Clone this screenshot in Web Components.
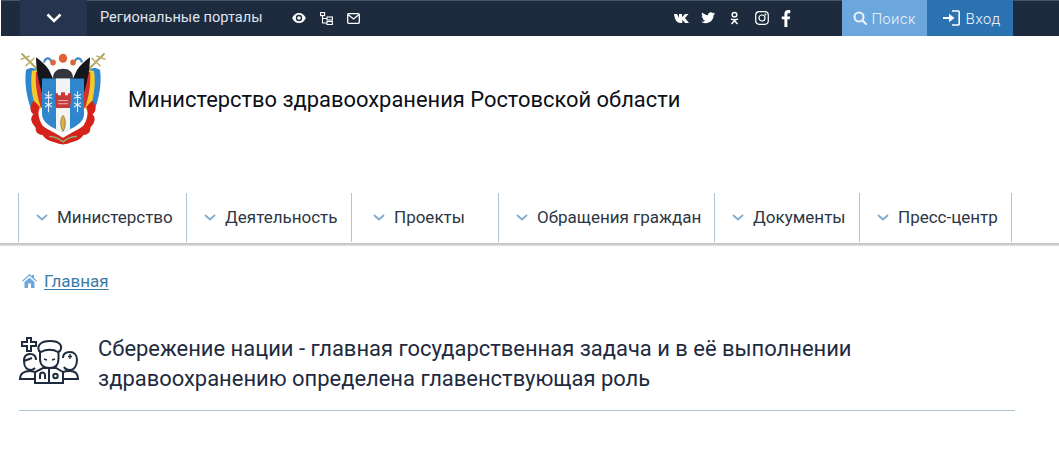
<!DOCTYPE html>
<html lang="ru"><head><meta charset="utf-8"><title>Министерство здравоохранения</title>
<style>html,body{margin:0;background:#fff;font-family:Roboto,"Liberation Sans",sans-serif;overflow:hidden}</style>
</head><body>
<top-bar></top-bar>
<site-head></site-head>
<main-nav>
<nav-item w="168">Министерство</nav-item><nav-item w="165">Деятельность</nav-item><nav-item w="147" p="21">Проекты</nav-item><nav-item w="216">Обращения граждан</nav-item><nav-item w="145">Документы</nav-item><nav-item w="153" last="1">Пресс-центр</nav-item>
</main-nav>
<bread-crumb></bread-crumb>
<page-title></page-title>
<script>
function def(name,html){customElements.define(name,class extends HTMLElement{connectedCallback(){if(this.shadowRoot)return;const r=this.attachShadow({mode:'open'});r.innerHTML=typeof html==='function'?html(this):html;}});}
def('top-bar',`<style>
:host{display:flex;height:36px;background:#1e2a3e;margin-left:1px;width:1058px;color:#dfe5ee;font-size:14.600px;box-shadow:inset 0 1px 0 #4a5468;box-sizing:border-box}
.ch{margin-left:19px;width:67px;background:#27344f;display:flex;align-items:center;justify-content:center}
.t{margin-left:13px;width:192px;line-height:35px;white-space:nowrap}
.ic{display:flex;align-items:center;gap:15px}.ic svg{display:block}
.so{margin-left:auto;display:flex;align-items:center;gap:12px;margin-right:51px}
.b{display:flex;align-items:center;justify-content:center;height:36px;width:85px;font-size:14.500px;gap:4px;font-family:Inter,Roboto,sans-serif;font-weight:300;letter-spacing:.01em}
.s{background:#6ba7dc;color:#e6f0fa}.l{width:86px;background:#2a72b0;color:#e6f0fa;margin-right:46px;gap:6px;padding-left:3px;box-sizing:border-box}
</style>
<div class="ch"><svg width="16" height="10" viewBox="0 0 16 10"><path d="M1.500 1.500 8 8l6.500-6.500" fill="none" stroke="#fff" stroke-width="2.600"/></svg></div>
<div class="t">Региональные порталы</div>
<div class="ic">
<svg width="14" height="10" viewBox="0 0 15 11"><path fill="#fff" fill-rule="evenodd" d="M7.500 0C4 0 1.300 2.200 0 5.500 1.300 8.800 4 11 7.500 11S13.700 8.800 15 5.500C13.700 2.200 11 0 7.500 0zm0 9a3.500 3.500 0 1 1 0-7 3.500 3.500 0 0 1 0 7zm0-5.500a2 2 0 1 0 0 4 2 2 0 0 0 0-4z"/></svg>
<svg width="13" height="13" viewBox="0 0 13 13" fill="none" stroke="#fff" stroke-width="1.100" style="margin-left:-1px"><rect x=".6" y=".6" width="4" height="3"/><rect x="7" y="5" width="5.400" height="3"/><rect x="7" y="9.500" width="5.400" height="3"/><path d="M2.500 3.600V11H7M2.500 6.500H7"/></svg>
<svg width="13" height="11" viewBox="0 0 13 11" fill="none" stroke="#fff" stroke-width="1.300" style="margin-left:-1px"><rect x=".7" y=".7" width="11.600" height="9.600" rx="1"/><path d="M1 1.500 6.500 6 12 1.500"/></svg>
</div>
<div class="so">
<svg width="15" height="9" viewBox="0 0 15 9"><path fill="#fff" d="M0 0h3l2 4V0h3v3l3-3h3.500l-3.500 4 4 5h-3.800L8.300 5.800V9H6.500C3 9 .8 6 0 0z"/></svg>
<svg width="14" height="12" viewBox="0 0 14 12"><path fill="#fff" d="M14 1.500c-.5.200-1 .4-1.600.4.600-.3 1-.8 1.200-1.500-.5.300-1.100.5-1.800.7A2.800 2.800 0 0 0 7 3.200C4.700 3.100 2.600 2 1.100.5.300 1.800.7 3.400 2 4.200c-.4 0-.900-.1-1.300-.3 0 1.300 1 2.500 2.300 2.800-.4.100-.800.100-1.300 0 .4 1.100 1.400 1.900 2.700 1.900A5.700 5.700 0 0 1 0 9.800 8 8 0 0 0 12.500 3.400c.600-.4 1.100-1.200 1.500-1.900z"/></svg>
<svg width="9" height="14" viewBox="0 0 9 13" fill="none" stroke="#fff" stroke-width="1.500" style="margin-left:3px"><circle cx="4.500" cy="3.200" r="2.300"/><path d="M1 7.300c2.200 1.200 4.800 1.200 7 0M4.500 8.300V9M1.500 12.500 4.500 9.200l3 3.300"/></svg>
<svg width="14" height="14" viewBox="0 0 14 14" fill="none" stroke="#fff" stroke-width="1.200" style="margin-left:4px"><rect x=".7" y=".7" width="12.600" height="12.600" rx="3.500"/><circle cx="7" cy="7" r="3"/><circle cx="10.500" cy="3.500" r=".4"/></svg>
<svg width="10" height="17" viewBox="0 0 9 16"><path fill="#fff" d="M8.500 3H7c-.8 0-1.200.3-1.200 1.200V6h2.600l-.4 2.800H5.800V16H3V8.800H.5V6H3V3.800C3 1.200 4.400 0 6.500 0h2z"/></svg>
</div>
<div class="b s"><svg width="14" height="14" viewBox="0 0 14 14" fill="none" stroke="#e6f0fa" stroke-width="2.200"><circle cx="6" cy="6" r="4.500"/><path d="m9.500 9.500 3.500 3.500" stroke-linecap="round"/></svg>Поиск</div>
<div class="b l"><svg width="17" height="16" viewBox="0 0 17 16" fill="none" stroke="#fff" stroke-width="1.600"><path d="M9 1h6.200a1 1 0 0 1 1 1v12a1 1 0 0 1-1 1H9"/><path fill="#fff" stroke="none" d="M0 7h6V3.800L11.500 8 6 12.200V9H0z"/></svg>Вход</div>`);
def('site-head',`<style>
:host{display:flex;align-items:flex-start;height:157px;box-sizing:border-box;padding:17px 0 0 20px}
svg{display:block;flex:none;filter:blur(.35px)}
h1{margin:30px 0 0 22px;font:400 21.900px/33px Roboto,sans-serif;color:#0b0f16;white-space:nowrap}
</style>
<svg width="86" height="92" viewBox="0 0 86 87" preserveAspectRatio="none">
<g fill="none" stroke-linecap="round">
<path d="M2 1 18 16M84 1 68 16" stroke="#a8a060" stroke-width="1.800"/>
<path d="M1 6 9 3M6 12 14 5M85 6 77 3M80 12 72 5" stroke="#c0b26a" stroke-width="1.500"/>
</g>
<path d="M6 16c5-3 9-2 12 1l2 35-7 5C7 45 4 28 6 16z" fill="#2f86cc"/>
<path d="M80 16c-5-3-9-2-12 1l-2 35 7 5c6-12 9-29 7-41z" fill="#2f86cc"/>
<path d="M12 17c3-1 5-1 7 1l3 34-5 3c-5-12-7-26-5-38z" fill="#f4c92a"/>
<path d="M74 17c-3-1-5-1-7 1l-3 34 5 3c5-12 7-26 5-38z" fill="#f4c92a"/>
<path d="M16 18h5l3 32-3 2c-4-11-6-23-5-34z" fill="#d5302b"/>
<path d="M70 18h-5l-3 32 3 2c4-11 6-23 5-34z" fill="#d5302b"/>
<path d="M16 4c5 3 10 8 13 12l4 8 4-2V30H23l-1 8c-3-10-6-22-6-34z" fill="#15171c"/>
<path d="M70 4c-5 3-10 8-13 12l-4 8-4-2V30h14l1 8c3-10 6-22 6-34z" fill="#15171c"/>
<path d="M33 24c0-6 4-9 10-9s10 3 10 9l-3 4H36z" fill="#34363d"/>
<path d="M24 9c1-5 6-5 7-1M62 9c-1-5-6-5-7-1" fill="none" stroke="#3d8bc9" stroke-width="2"/>
<circle cx="33" cy="9" r="2.800" fill="#d9683f"/><circle cx="43" cy="5" r="4.200" fill="#e0603a"/><circle cx="53" cy="9" r="2.800" fill="#d9683f"/>
<path d="M22 24h42v34c0 8-10 13-21 17-11-4-21-9-21-17z" fill="#2f86cc"/>
<path d="M36 24h14v48l-7 3-7-3z" fill="#f4f4f2"/>
<path d="M35 43v-5h3v2h3v-3h4v3h3v-2h3v5l-1 9H36z" fill="#c73a3a"/><path d="M38 45h10M38 48h10" stroke="#f3d0ce" stroke-width=".8"/>
<path d="M43 59c3 3 3 11 0 15-3-4-3-12 0-15z" fill="#d9b24a" stroke="#7d6a28" stroke-width=".7"/>
<g fill="none" stroke="#e9eef2" stroke-width="1.100"><path d="M28.500 36v20M25 39l7 4M32 39l-7 4M25 47l7 4M32 47l-7 4M57.500 36v20M54 39l7 4M61 39l-7 4M54 47l7 4M61 47l-7 4"/></g>
<path d="M14 46c-5 5-3 10 0 12-4 4-2 8 2 12 0 5 3 7 7 7 3 6 10 6 15 8l5 1 5-1c5-2 12-2 15-8 4 0 7-2 7-7 4-4 6-8 2-12 3-2 5-7 0-12l-5 5c2 5 1 12-3 18-4 3-8 5-12 7l-9 5-9-5c-4-2-8-4-12-7-4-6-5-13-3-18z" fill="#d5231c" stroke="#d5231c" stroke-width="1.200"/>
<path d="M29 79c5 0 10 2 14 5 4-3 9-5 14-5" fill="none" stroke="#93a870" stroke-width="1.400"/>
</svg>
<h1>Министерство здравоохранения Ростовской области</h1>`);
def('main-nav',`<style>
:host{display:flex;box-sizing:border-box;height:52px;padding:0 0 0 18px;border-bottom:2px solid #c9c9c9;box-shadow:0 1px 1px #e2e2e2}
</style><slot></slot>`);
def('nav-item',el=>`<style>
:host{display:flex;align-items:center;box-sizing:border-box;height:49px;width:${el.getAttribute('w')}px;border-left:1px solid #aec6d6;${el.hasAttribute('last')?'border-right:1px solid #aec6d6;':''}color:#2d3644;font-size:17px;white-space:nowrap;padding-left:${el.getAttribute('p')||17}px;padding-bottom:1px}
svg{margin-right:9px;flex:none}
</style><svg width="12" height="7" viewBox="0 0 12 7"><path d="M1 1l5 4.500L11 1" fill="none" stroke="#7aaad2" stroke-width="1.700"/></svg><slot></slot>`);
def('bread-crumb',`<style>
:host{display:flex;align-items:center;gap:7px;height:36px;margin-top:18px;padding-left:22px;font-size:17px;color:#3b7ba8}
u{text-underline-offset:2px}
</style><svg width="15" height="14" viewBox="0 0 15 14"><path fill="#6ba7dc" d="M7.500 0 10 2.200V1h2v3l3 2.700-.8.900L7.500 1.800.8 7.600 0 6.700zM2.500 8 7.500 3.700 12.500 8v6H9V9.500H6V14H2.500z"/></svg><u>Главная</u>`);
def('page-title',`<style>
:host{display:flex;align-items:flex-start;box-sizing:border-box;width:996px;margin:32px 0 0 19px;height:80px;border-bottom:1px solid #a9c2cf;color:#1e2a3e;padding-top:3px}
svg{flex:none;margin:2px 19px 0 0}
div{font-size:21.950px;line-height:30px;}
</style>
<svg width="60" height="48" viewBox="0 0 60 48" fill="none" stroke="#1e2a3e" stroke-width="2">
<path d="M8 2h4v4h5v4h-5v5H8v-5H3V6h5z"/>
<path d="M20 15c-2-5 1-10 11-10s13 5 10 10l-2 1c-5-3-12-3-17 0z"/>
<path d="M21 16v7c0 6 4 9 9.500 9s9-3 9-9v-7"/><path d="M25 23l3 1M33 24l3-1" stroke-width="1.400"/>
<path d="M16 47V36l8-4h13l7 4v11z"/><path d="M30 33v14M21 43v-4a2.500 2.500 0 0 1 5 0v4"/><circle cx="36.500" cy="40" r="2.200"/>
<path d="M5 25c0-5 2-7 6-7s6 2 6 6"/><path d="M5 25c0 6 3 9 7 9 1 0 3-1 4-2M5 25l8-3"/>
<path d="M16 36c-1 0-3-1-5-1-6 0-10 3-10 8h15"/>
<path d="M44 22c0-4 3-6 7-6s7 3 7 8c0 6-3 10-7 10-2 0-5-1-6-3"/><path d="M51 18v5M49 20.500h4" stroke-width="1.300"/>
<path d="M44 36c2-1 4-1 7-1 5 0 8 3 8 8H44"/>
</svg><div>Сбережение нации - главная государственная задача и в её выполнении<br>здравоохранению определена главенствующая роль</div>`);
</script>
</body></html>
